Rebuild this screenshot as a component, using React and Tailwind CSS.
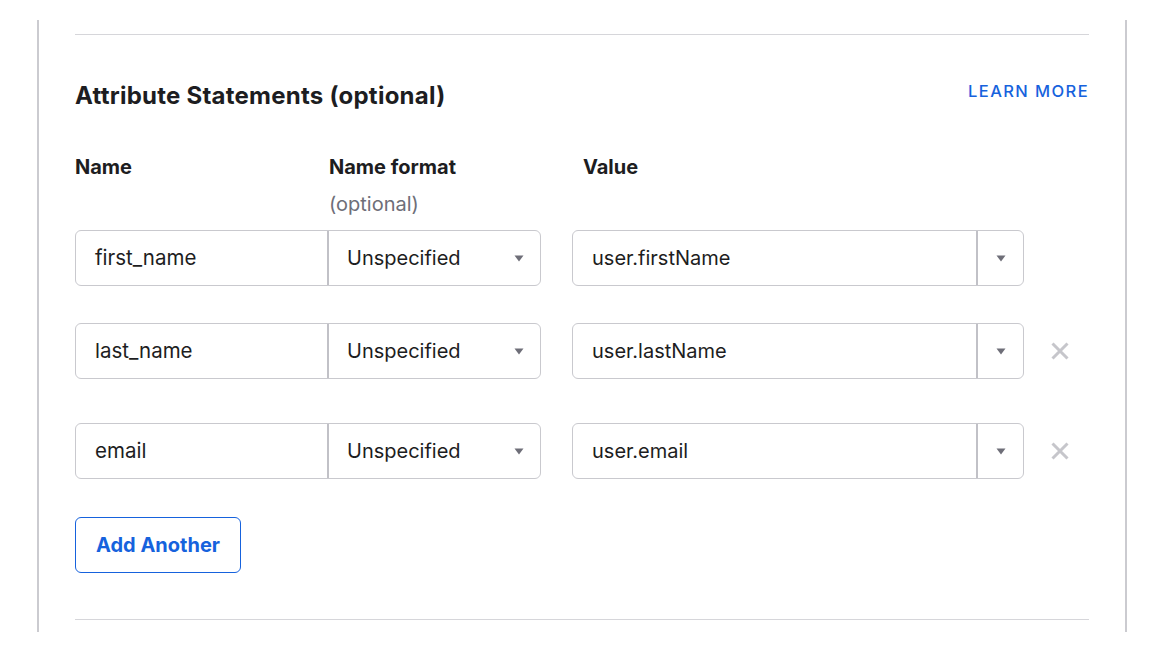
import React from "react";

const Caret = () => (
  <svg width="10" height="7" viewBox="0 0 10 7" className="shrink-0">
    <path d="M0.5 0.5 L9.5 0.5 L5 6.5 Z" fill="#6e6e78" />
  </svg>
);

const XIcon = () => (
  <svg width="20" height="20" viewBox="0 0 20 20">
    <path d="M2.5 2.5 L17.5 17.5 M17.5 2.5 L2.5 17.5" stroke="#c6c6cb" strokeWidth="3" strokeLinecap="butt" />
  </svg>
);

const Row = ({ name, value, removable, className }) => (
  <div className={"flex items-center " + className}>
    <div className="flex h-[56px] w-[466px] rounded-[6px] border border-[#c9c9ce]">
      <div className="flex w-[251px] items-center pl-[19px] text-[20.5px] text-[#1d1d21]">{name}</div>
      <div className="w-[2px] bg-[#c1c1c7]" />
      <div className="flex flex-1 items-center justify-between pl-[18px] pr-[16px] text-[20px] text-[#1d1d21]">
        <span>Unspecified</span>
        <Caret />
      </div>
    </div>
    <div className="ml-[31px] flex h-[56px] w-[452px] rounded-[6px] border border-[#c9c9ce]">
      <div className="flex w-[403px] items-center pl-[19px] text-[20px] text-[#1d1d21]">{value}</div>
      <div className="w-[2px] bg-[#c1c1c7]" />
      <div className="flex flex-1 items-center justify-center">
        <Caret />
      </div>
    </div>
    {removable && (
      <div className="ml-[26px] flex items-center">
        <XIcon />
      </div>
    )}
  </div>
);

export default function App() {
  return (
    <div className="h-[660px] w-[1170px] bg-white pt-[20px]" style={{ fontFamily: "Inter, 'Noto Sans', sans-serif" }}>
      <div className="ml-[37px] h-[612px] w-[1090px] border-x-2 border-[#cbcbd0] px-[36px] pt-[14px]">
        <div className="h-[1px] bg-[#d6d6da]" />
        <div className="mt-[47px] flex items-start justify-between">
          <h2 className="text-[24px] font-bold leading-[28px] tracking-[0.01em] text-[#1d1d21]">Attribute Statements (optional)</h2>
          <a className="text-[16.5px] font-medium uppercase leading-[18px] tracking-[0.085em] text-[#1662dd]">Learn more</a>
        </div>
        <div className="mt-[43px] flex text-[20px] leading-[28px] text-[#1d1d21]">
          <div className="w-[254px] font-bold">Name</div>
          <div className="w-[254px]">
            <div className="font-bold">Name format</div>
            <div className="mt-[9px] text-[20px] text-[#6e6e78]">(optional)</div>
          </div>
          <div className="font-bold">Value</div>
        </div>
        <Row className="mt-[12px]" name="first_name" value="user.firstName" />
        <Row className="mt-[37px]" name="last_name" value="user.lastName" removable />
        <Row className="mt-[44px]" name="email" value="user.email" removable />
        <button className="mt-[38px] flex h-[56px] w-[166px] items-center justify-center rounded-[6px] border-[1.5px] border-[#1662dd] text-[20px] font-bold text-[#1662dd]">
          Add Another
        </button>
        <div className="mt-[46px] h-[1px] bg-[#d6d6da]" />
      </div>
    </div>
  );
}
